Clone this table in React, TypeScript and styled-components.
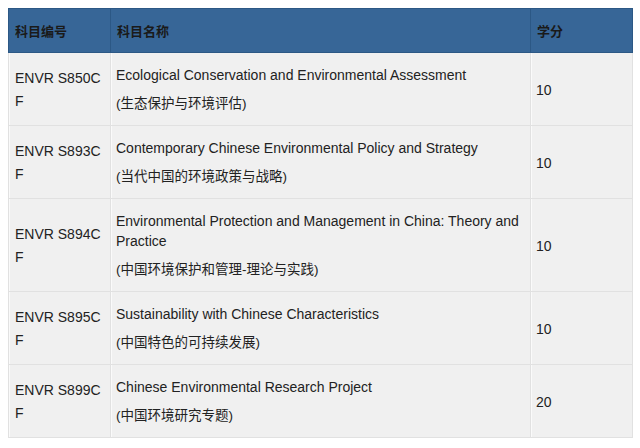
import React from "react";
import styled, { createGlobalStyle } from "styled-components";

const Global = createGlobalStyle`
  html, body { margin: 0; padding: 0; background: #ffffff; }
  body { padding: 8px; font-family: "Liberation Sans", Arial, "Noto Sans CJK SC", sans-serif; }
`;

const Table = styled.table`
  width: 624px;
  border-collapse: collapse;
  table-layout: fixed;
  font-size: 14px;
  color: #222;
`;

const HeadCell = styled.th<{ $w: number }>`
  width: ${(p) => p.$w}px;
  height: 44px;
  box-sizing: border-box;
  background: #376697;
  border: 1px solid #2c5885;
  color: #1a1a1a;
  font-weight: bold;
  text-align: left;
  padding: 0 6px;
  font-family: "Noto Sans CJK SC", sans-serif;
  font-size: 13px;
`;

const Cell = styled.td<{ $code?: boolean }>`
  background: #f0f0f0;
  border: 1px solid #e1e1e1;
  box-shadow: inset 1px 0 0 #fafafa;
  padding: ${(p) => (p.$code ? "12px 6px 11px" : "12px 5px 11px")};
  vertical-align: middle;
  word-break: ${(p) => (p.$code ? "break-all" : "normal")};
  line-height: ${(p) => (p.$code ? "23px" : "20px")};
`;

const En = styled.div`
  line-height: 20px;
`;

const Zh = styled.div`
  margin-top: 9px;
  line-height: 20px;
  font-size: 13.5px;
  font-family: "Liberation Sans", "Noto Sans CJK SC", sans-serif;
`;

const rows = [
  ["ENVR S850CF", "Ecological Conservation and Environmental Assessment", "(生态保护与环境评估)", "10"],
  ["ENVR S893CF", "Contemporary Chinese Environmental Policy and Strategy", "(当代中国的环境政策与战略)", "10"],
  ["ENVR S894CF", "Environmental Protection and Management in China: Theory and Practice", "(中国环境保护和管理-理论与实践)", "10"],
  ["ENVR S895CF", "Sustainability with Chinese Characteristics", "(中国特色的可持续发展)", "10"],
  ["ENVR S899CF", "Chinese Environmental Research Project", "(中国环境研究专题)", "20"],
];

export default function App() {
  return (
    <>
      <Global />
      <Table>
        <thead>
          <tr>
            <HeadCell $w={102}>科目编号</HeadCell>
            <HeadCell $w={420}>科目名称</HeadCell>
            <HeadCell $w={102}>学分</HeadCell>
          </tr>
        </thead>
        <tbody>
          {rows.map((r) => (
            <tr key={r[0]}>
              <Cell $code>{r[0]}</Cell>
              <Cell>
                <En>{r[1]}</En>
                <Zh>{r[2]}</Zh>
              </Cell>
              <Cell>{r[3]}</Cell>
            </tr>
          ))}
        </tbody>
      </Table>
    </>
  );
}
